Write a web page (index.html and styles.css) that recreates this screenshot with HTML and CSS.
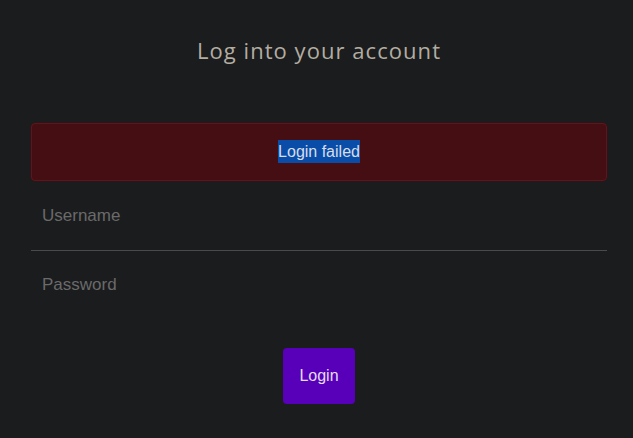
FILE: index.html
```html
<!DOCTYPE html>
<html>
<head>
<meta charset="utf-8">
<link rel="stylesheet" href="styles.css">
</head>
<body>
<main class="page">
  <h1 class="title">Log into your account</h1>
  <form class="form">
    <div class="alert"><span class="selected">Login failed</span></div>
    <div class="field field-user"><input class="input" type="text" placeholder="Username"></div>
    <div class="field field-pass"><input class="input" type="password" placeholder="Password"></div>
    <div class="actions"><button class="btn" type="button">Login</button></div>
  </form>
</main>
</body>
</html>
```
FILE: styles.css
```css
html, body {
  margin: 0;
  padding: 0;
  background: #1b1c1e;
}
body {
  font-family: "Liberation Sans", Arial, sans-serif;
}
.page {
  padding: 0 26px 0 31px;
}
.title {
  margin: 0;
  padding-top: 35px;
  height: 123px;
  box-sizing: border-box;
  text-align: center;
  font-family: "Open Sans", sans-serif;
  font-weight: 400;
  font-size: 22px;
  line-height: 30px;
  letter-spacing: 1.05px;
  color: #b3ada1;
}
.form {
  display: flex;
  flex-direction: column;
}
.alert {
  height: 58px;
  box-sizing: border-box;
  border: 1px solid #6a1019;
  border-radius: 4px;
  background: #440e13;
  display: flex;
  align-items: center;
  justify-content: center;
}
.selected {
  display: inline-block;
  background: #0a4da9;
  color: #d7dee9;
  font-size: 16px;
  line-height: 23px;
  margin-top: -1px;
}
.field {
  display: flex;
}
.field-user {
  padding-top: 13px;
  border-bottom: 1px solid #4a4a4c;
}
.field-pass {
  padding-top: 12px;
}
.input {
  flex: 1;
  background: transparent;
  border: 0;
  outline: none;
  font-family: "Liberation Sans", Arial, sans-serif;
  font-size: 17px;
  line-height: 20px;
  color: #ddd;
  padding: 12px 11px 24px;
  margin: 0;
}
.input::placeholder {
  color: #6a6a6a;
}
.actions {
  display: flex;
  justify-content: center;
  padding-top: 29px;
}
.btn {
  width: 72px;
  height: 56px;
  border: 0;
  border-radius: 4px;
  background: #5800b9;
  color: #e3dcf2;
  font-family: "Liberation Sans", Arial, sans-serif;
  font-size: 16px;
  padding: 0;
}
```
